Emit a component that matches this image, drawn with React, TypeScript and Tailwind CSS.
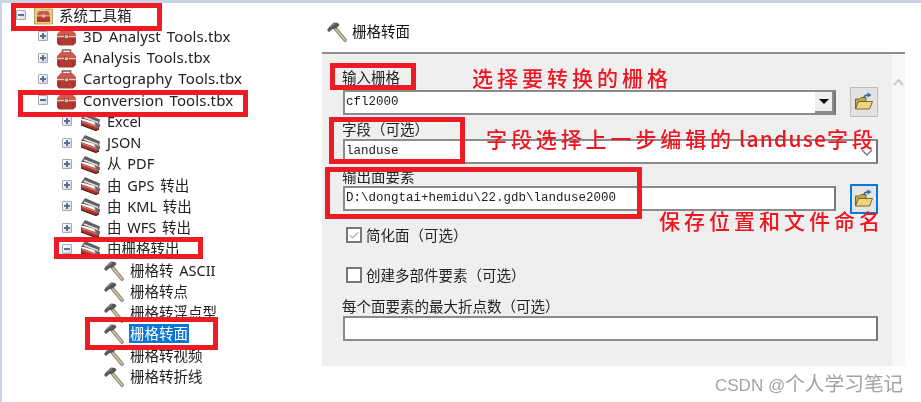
import { Check } from 'lucide-react'

const fontUi = "font-['Noto_Sans','Noto_Sans_CJK_SC',sans-serif]"

function Expander({ open }: { open: boolean }) {
  return (
    <span className="relative mr-[8px] block h-[10px] w-[10px] shrink-0 rounded-[1px] border border-[#a9a9a9] bg-gradient-to-br from-white to-[#d5d9e2]">
      <span className="absolute left-[1px] right-[1px] top-[3px] h-[2px] bg-[#5a6d9c]" />
      {!open && <span className="absolute bottom-[1px] left-[3px] top-[1px] w-[2px] bg-[#5a6d9c]" />}
    </span>
  )
}

function Toolbox() {
  return (
    <svg width="21" height="20" viewBox="0 0 21 20" className="shrink-0">
      <path d="M6.5 5V2h8v3" fill="none" stroke="#7d5f5a" strokeWidth="1.6" />
      <path d="M1 8l4-4h11l4 4v3H1z" fill="#d0574c" />
      <path d="M1 11h19v6l-3 2.5H3L1 17z" fill="#b23a32" />
      <path d="M1 10h19v1.2H1z" fill="#ecc9c0" />
      <path d="M3 13v6" stroke="#8f2c27" strokeWidth="1" />
      <path d="M17 13v6" stroke="#8f2c27" strokeWidth="1" />
      <rect x="8.5" y="9" width="4" height="3.5" fill="#e6b9a4" stroke="#7a3a30" strokeWidth="0.6" />
    </svg>
  )
}

function RootToolbox() {
  return (
    <svg width="19" height="20" viewBox="0 0 19 20" className="shrink-0">
      <path d="M0.5 19V2h6l1.5 2h10.500v15z" fill="#e6cf86" stroke="#a88f45" strokeWidth="0.8" />
      <path d="M3 9l2-3h9l2 3v2H3z" fill="#d0574c" />
      <path d="M3 11h13v6H3z" fill="#b23a32" />
      <path d="M3 10.400h13v1H3z" fill="#ecc9c0" />
      <rect x="8" y="9.500" width="3" height="3" fill="#e6b9a4" />
    </svg>
  )
}

function Toolset() {
  return (
    <svg width="21" height="20" viewBox="0 0 21 20" className="shrink-0">
      <path d="M1 8l4-6 15 6.500-1 4L4 8z" fill="#5f5f62" />
      <path d="M4 6l14 5.500" stroke="#e2e2e2" strokeWidth="1.6" />
      <path d="M1 9l18 6.500V18l-3 1.500L1 14z" fill="#b5332c" />
      <path d="M1 14l15 5.500 3-1.500" fill="none" stroke="#3a2020" strokeWidth="1.2" />
      <path d="M2 10.500l15 5.500" stroke="#d98b80" strokeWidth="1" />
      <path d="M14 11l6 2v3l-3 1z" fill="#6b6b6e" />
    </svg>
  )
}

function Hammer() {
  return (
    <svg width="21" height="21" viewBox="0 0 21 21" className="shrink-0">
      <path d="M9 7l10 12" stroke="#8b8577" strokeWidth="3.600" strokeLinecap="round" />
      <path d="M9 7l10 12" stroke="#d5c7a4" strokeWidth="1.600" strokeLinecap="round" />
      <path d="M1 9l3-4 4-3.500 4 .5 1.500 2L10 7.500 6.500 8 3 11z" fill="#57575a" />
      <path d="M4 6l5-3.500" stroke="#9c9ca0" strokeWidth="1" />
    </svg>
  )
}

function FolderIcon() {
  return (
    <svg width="20" height="20" viewBox="0 0 20 20">
      <path d="M1.500 17V7h4l1.500-1.500h5V9" fill="#c5a64a" stroke="#6d5a22" strokeWidth="0.900" />
      <path d="M1.500 17l3-7.500h14l-3 7.500z" fill="#ecd77f" stroke="#6d5a22" strokeWidth="0.900" />
      <path d="M10 6c0-2 1.500-3 4-3" fill="none" stroke="#2f6a9c" strokeWidth="1.600" />
      <path d="M13.500 0.500l4 2.500-4 2.500z" fill="#2f6a9c" />
    </svg>
  )
}

type Row = {
  label: string
  kind: 'root' | 'box' | 'set' | 'tool'
  indent: string
  open?: boolean
  selected?: boolean
}

const rows: Row[] = [
  { label: '系统工具箱', kind: 'root', indent: 'pl-[14px]', open: true },
  { label: '3D Analyst Tools.tbx', kind: 'box', indent: 'pl-[36px]', open: false },
  { label: 'Analysis Tools.tbx', kind: 'box', indent: 'pl-[36px]', open: false },
  { label: 'Cartography Tools.tbx', kind: 'box', indent: 'pl-[36px]', open: false },
  { label: 'Conversion Tools.tbx', kind: 'box', indent: 'pl-[36px]', open: true },
  { label: 'Excel', kind: 'set', indent: 'pl-[60px]', open: false },
  { label: 'JSON', kind: 'set', indent: 'pl-[60px]', open: false },
  { label: '从 PDF', kind: 'set', indent: 'pl-[60px]', open: false },
  { label: '由 GPS 转出', kind: 'set', indent: 'pl-[60px]', open: false },
  { label: '由 KML 转出', kind: 'set', indent: 'pl-[60px]', open: false },
  { label: '由 WFS 转出', kind: 'set', indent: 'pl-[60px]', open: false },
  { label: '由栅格转出', kind: 'set', indent: 'pl-[60px]', open: true },
  { label: '栅格转 ASCII', kind: 'tool', indent: 'pl-[101px]' },
  { label: '栅格转点', kind: 'tool', indent: 'pl-[101px]' },
  { label: '栅格转浮点型', kind: 'tool', indent: 'pl-[101px]' },
  { label: '栅格转面', kind: 'tool', indent: 'pl-[101px]', selected: true },
  { label: '栅格转视频', kind: 'tool', indent: 'pl-[101px]' },
  { label: '栅格转折线', kind: 'tool', indent: 'pl-[101px]' },
]

function TreeRow({ row }: { row: Row }) {
  return (
    <div className={`flex h-[21.25px] items-center ${row.indent}`}>
      {row.open !== undefined && <Expander open={row.open} />}
      {row.kind === 'root' && <RootToolbox />}
      {row.kind === 'box' && <Toolbox />}
      {row.kind === 'set' && <Toolset />}
      {row.kind === 'tool' && <Hammer />}
      <span
        className={`ml-[5px] whitespace-nowrap px-[1px] leading-[19px] [word-spacing:2px] ${
          row.kind === 'box' ? 'text-[15px] tracking-[0.1px]' : 'text-[14.5px]'
        } ${row.selected ? 'bg-[#0a76d6] text-white' : 'text-[#222]'}`}
      >
        {row.label}
      </span>
    </div>
  )
}

function Label({ children }: { children: React.ReactNode }) {
  return <div className="h-[20px] pl-[20px] text-[14.5px] leading-[20px] text-[#222]">{children}</div>
}

function Field({ children, width }: { children?: React.ReactNode; width: string }) {
  return (
    <div className={`relative flex h-[25px] items-center border-2 border-[#8b8b8b] border-r-[#777] bg-white pl-[1px] font-['Liberation_Mono',monospace] text-[12.5px] text-[#222] ${width}`}>
      {children}
    </div>
  )
}

function FolderButton({ active }: { active?: boolean }) {
  return (
    <div
      className={`flex h-[30px] w-[28px] items-center justify-center ${
        active ? 'border-2 border-[#0a78d7] bg-[#e4e4e4]' : 'border border-[#bdbdbd] bg-[#e2e2e2]'
      }`}
    >
      <FolderIcon />
    </div>
  )
}

function CheckRow({ checked, children }: { checked: boolean; children: React.ReactNode }) {
  return (
    <div className="flex h-[20px] items-center pl-[24px] text-[14.5px] text-[#222]">
      <span className="mr-[4px] flex h-[16px] w-[16px] items-center justify-center border-2 border-[#777] bg-white">
        {checked && <Check size={13} strokeWidth={1.6} className="text-[#555]" />}
      </span>
      {children}
    </div>
  )
}

function Annotation({ className, children }: { className: string; children: React.ReactNode }) {
  return (
    <div className={`absolute whitespace-nowrap font-['Noto_Sans_CJK_SC',sans-serif] text-[21px] font-medium leading-[26px] text-[#f0141e] ${className}`}>
      {children}
    </div>
  )
}

const redBox = 'absolute border-[5px] border-[#ed1c24]'
const cjkOnly = "font-['Noto_Sans_CJK_SC',sans-serif]"

export default function App() {
  return (
    <div className={`relative h-[402px] w-[921px] overflow-hidden bg-white blur-[0.35px] ${fontUi}`}>
      <div className="flex h-full flex-col border-l-2 border-t-[3px] border-[#c9d3e6]">
        <div className="flex flex-1">
          <div className="w-[320px] shrink-0 pt-[1.5px]">
            {rows.map((row) => (
              <TreeRow key={row.label} row={row} />
            ))}
          </div>

          <div className="flex w-[583px] flex-col">
            <div className="flex h-[49px] items-center gap-[5px] pl-[4px] pt-[8px]">
              <Hammer />
              <span className="text-[14.5px] text-[#111]">栅格转面</span>
            </div>
            <div className="flex h-[314px] border-t-2 border-[#8e8e8e]">
              <div className={`w-[570px] bg-[#efefef] pt-[13px] ${cjkOnly}`}>
                <Label>输入栅格</Label>
                <div className="mt-[3px] flex h-[24px] items-center">
                  <div className="ml-[21px]">
                    <Field width="w-[493px]">
                      cfl2000
                      <span className="absolute right-0 top-0 flex h-[21px] w-[19px] items-center justify-center border-b-2 border-r-2 border-[#8b8b8b] bg-[#efefef]">
                        <span className="h-0 w-0 border-x-[5px] border-t-[5px] border-x-transparent border-t-black" />
                      </span>
                    </Field>
                  </div>
                  <div className="ml-[14px]">
                    <FolderButton />
                  </div>
                </div>
                <div className="mt-[5px]">
                  <Label>{'字段\uFF08可选\uFF09'}</Label>
                </div>
                <div className="ml-[21px]">
                  <Field width="w-[535px]">
                    landuse
                    <svg width="12" height="8" viewBox="0 0 12 8" className="absolute right-[3px] top-[8px]">
                      <path d="M1 1l5 5 5-5" fill="none" stroke="#777" strokeWidth="1.4" />
                    </svg>
                  </Field>
                </div>
                <div className="mt-[2px]">
                  <Label>输出面要素</Label>
                </div>
                <div className="flex h-[25px] items-center">
                  <div className="ml-[21px]">
                    <Field width="w-[493px]">D:\dongtai+hemidu\22.gdb\landuse2000</Field>
                  </div>
                  <div className="ml-[14px]">
                    <FolderButton active />
                  </div>
                </div>
                <div className="mt-[14px]">
                  <CheckRow checked>{'简化面\uFF08可选\uFF09'}</CheckRow>
                </div>
                <div className="mt-[20px]">
                  <CheckRow checked={false}>{'创建多部件要素\uFF08可选\uFF09'}</CheckRow>
                </div>
                <div className="mt-[11px]">
                  <Label>{'每个面要素的最大折点数\uFF08可选\uFF09'}</Label>
                </div>
                <div className="ml-[21px]">
                  <Field width="w-[535px]" />
                </div>
              </div>
              <div className="flex w-[13px] justify-center bg-[#f7f7f7] pt-[24px]">
                <svg width="11" height="9" viewBox="0 0 11 9">
                  <path d="M1 7l4.500-5L10 7" fill="none" stroke="#c9c9c9" strokeWidth="2" />
                </svg>
              </div>
            </div>
            <div className="flex-1" />
          </div>
        </div>
      </div>

      <Annotation className="left-[472px] top-[64px] tracking-[4px]">选择要转换的栅格</Annotation>
      <Annotation className="left-[486px] top-[125px] tracking-[3.9px]">
        字段选择上一步编辑的<span className="ml-[4px] tracking-[1.2px]">landuse</span>字段
      </Annotation>
      <Annotation className="left-[659px] top-[207px] tracking-[4px]">保存位置和文件命名</Annotation>

      <div className={`${redBox} left-[11px] top-[3px] h-[28px] w-[151px]`} />
      <div className={`${redBox} left-[18px] top-[90px] h-[27px] w-[230px]`} />
      <div className={`${redBox} left-[54px] top-[237px] h-[22px] w-[149px]`} />
      <div className={`${redBox} left-[85px] top-[317px] h-[33px] w-[133px]`} />
      <div className={`${redBox} left-[330px] top-[63px] h-[27px] w-[86px]`} />
      <div className={`${redBox} left-[329px] top-[117px] h-[47px] w-[136px]`} />
      <div className={`${redBox} left-[325px] top-[167px] h-[52px] w-[317px]`} />

      <div className="absolute left-[715px] top-[372px] whitespace-nowrap font-['Liberation_Sans','Noto_Sans_CJK_SC',sans-serif] text-[17px] leading-[24px] text-[#a3a3a3]">
        CSDN @<span className="text-[19.7px]">个人学习笔记</span>
      </div>
    </div>
  )
}
